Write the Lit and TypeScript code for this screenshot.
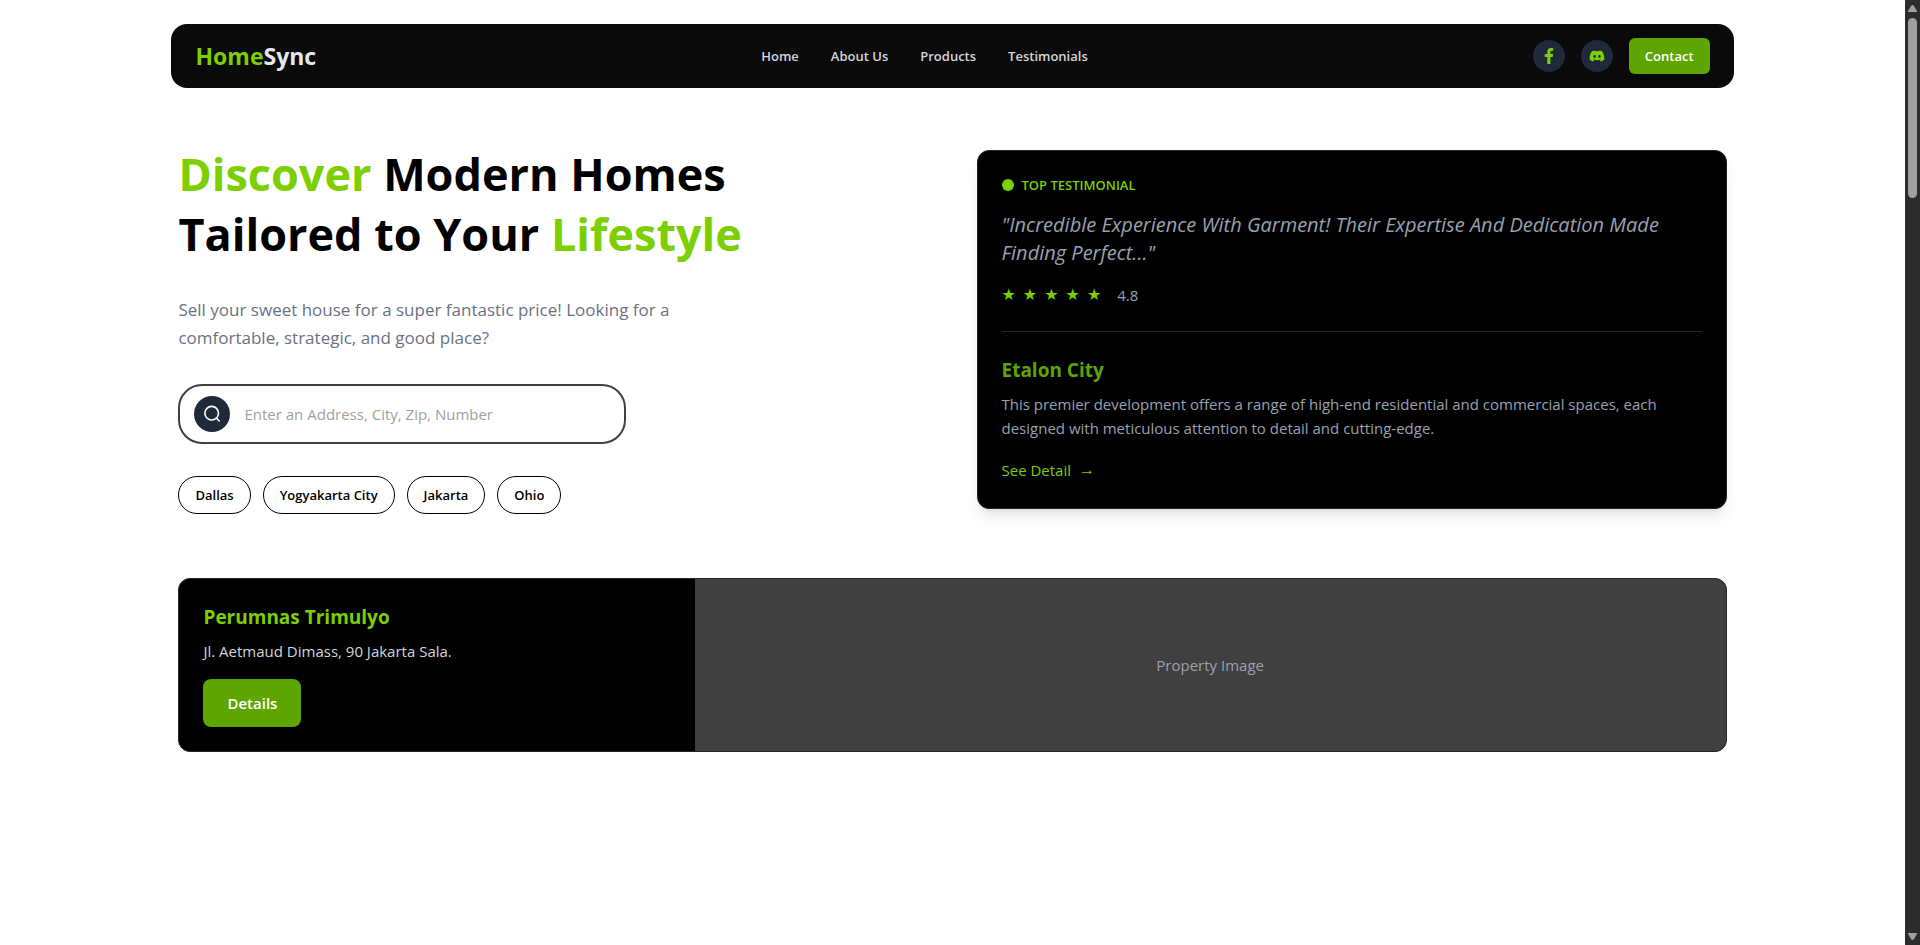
import { LitElement, html, css, svg } from "lit";
import { customElement, state } from "lit/decorators.js";

const facebook = svg`<path d="M279.14 288l14.22-92.66h-88.91v-60.13c0-25.35 12.42-50.06 52.24-50.06h40.42V6.26S260.43 0 225.36 0c-73.22 0-121.08 44.38-121.08 124.72v70.62H22.89V288h81.39v224h100.17V288z"></path>`;
const discord = svg`<path d="M524.531,69.836a1.5,1.5,0,0,0-.764-.7A485.065,485.065,0,0,0,404.081,32.03a1.816,1.816,0,0,0-1.923.91,337.461,337.461,0,0,0-14.9,30.6,447.848,447.848,0,0,0-134.426,0,309.541,309.541,0,0,0-15.135-30.6,1.89,1.89,0,0,0-1.924-.91A483.689,483.689,0,0,0,116.085,69.137a1.712,1.712,0,0,0-.788.676C39.068,183.651,18.186,294.69,28.43,404.354a2.016,2.016,0,0,0,.765,1.375A487.666,487.666,0,0,0,176.02,479.918a1.9,1.9,0,0,0,2.063-.676A348.2,348.2,0,0,0,208.12,430.4a1.86,1.86,0,0,0-1.019-2.588,321.173,321.173,0,0,1-45.868-21.853,1.885,1.885,0,0,1-.185-3.126c3.082-2.309,6.166-4.711,9.109-7.137a1.819,1.819,0,0,1,1.9-.256c96.229,43.917,200.41,43.917,295.5,0a1.812,1.812,0,0,1,1.924.233c2.944,2.426,6.027,4.851,9.132,7.16a1.884,1.884,0,0,1-.162,3.126,301.407,301.407,0,0,1-45.89,21.83,1.875,1.875,0,0,0-1,2.611,391.055,391.055,0,0,0,30.014,48.815,1.864,1.864,0,0,0,2.063.7A486.048,486.048,0,0,0,610.7,405.729a1.882,1.882,0,0,0,.765-1.352C623.729,277.594,590.933,167.465,524.531,69.836ZM222.491,337.58c-28.972,0-52.844-26.587-52.844-59.239S193.056,219.1,222.491,219.1c29.665,0,53.306,26.82,52.843,59.239C275.334,310.993,251.924,337.58,222.491,337.58Zm195.38,0c-28.971,0-52.843-26.587-52.843-59.239S388.437,219.1,417.871,219.1c29.667,0,53.307,26.82,52.844,59.239C470.715,310.993,447.538,337.58,417.871,337.58Z"></path>`;

@customElement("app-root")
export class AppRoot extends LitElement {
  static styles = css`
    :host {
      --lime: #7ccf00;
      --lime-dark: #5ea500;
      --muted: #99a1af;
      --line: #262626;
      display: flex;
      min-height: 100vh;
      background: #fff;
      color: #000;
      font-family: "Open Sans", "Noto Sans", sans-serif;
      font-size: 15px;
      line-height: 24px;
    }
    * {
      box-sizing: border-box;
    }
    h1, h2, p, ul {
      margin: 0;
      padding: 0;
    }
    a {
      color: inherit;
      text-decoration: none;
    }
    button {
      border: 0;
      margin: 0;
      font: inherit;
      cursor: pointer;
    }
    .page {
      flex: 1;
      min-width: 0;
      padding: 24px 0;
    }
    .container {
      width: 82%;
      margin: 0 auto;
    }
    .nav {
      display: flex;
      justify-content: space-between;
      align-items: center;
      height: 64px;
      padding: 0 24px;
      border-radius: 16px;
      background: #0a0a0a;
    }
    .logo {
      color: #e5e7eb;
      font-size: 23px;
      font-weight: 700;
      line-height: 32px;
    }
    .accent {
      color: var(--lime);
    }
    .links {
      display: flex;
      gap: 32px;
      color: #d1d5dc;
      font-size: 13px;
      font-weight: 600;
      line-height: 20px;
    }
    .actions {
      display: flex;
      align-items: center;
      gap: 16px;
    }
    .social {
      display: grid;
      place-items: center;
      width: 32px;
      height: 32px;
      border-radius: 50%;
      background: #1e2939;
      color: var(--lime);
    }
    .social svg {
      width: 16px;
      height: 16px;
      fill: currentColor;
    }
    .contact {
      padding: 8px 16px;
      border-radius: 6px;
      background: var(--lime-dark);
      color: #fff;
      font-size: 13px;
      font-weight: 600;
      line-height: 20px;
    }
    .hero {
      display: grid;
      grid-template-columns: 1fr 1fr;
      align-items: center;
      gap: 48px;
      padding: 56px 7px 0;
    }
    .intro {
      display: flex;
      flex-direction: column;
      gap: 32px;
    }
    h1 {
      font-size: 45px;
      font-weight: 700;
      line-height: 60px;
    }
    .heading-line {
      display: block;
    }
    .lead {
      max-width: 512px;
      color: #6a7282;
      font-size: 17px;
      line-height: 28px;
    }
    .search {
      display: flex;
      align-items: center;
      gap: 14px;
      max-width: 448px;
      height: 60px;
      padding: 0 14px;
      border: 2px solid #404040;
      border-radius: 24px;
    }
    .search-button {
      display: grid;
      place-items: center;
      width: 36px;
      height: 36px;
      padding: 0;
      border-radius: 50%;
      background: #1e2939;
      color: #fff;
    }
    .search-button svg {
      width: 20px;
      height: 20px;
      fill: none;
      stroke: currentColor;
      stroke-width: 1.6;
      stroke-linecap: round;
    }
    .search-input {
      flex: 1;
      min-width: 0;
      padding: 0;
      border: 0;
      outline: 0;
      background: none;
      font: inherit;
    }
    .search-input::placeholder {
      color: #a1a1a1;
      opacity: 1;
    }
    .tags {
      display: flex;
      flex-wrap: wrap;
      gap: 12px;
    }
    .tag {
      padding: 8px 16px;
      border: 1px solid #000;
      border-radius: 19px;
      background: #fff;
      color: #000;
      font-size: 13px;
      font-weight: 600;
      line-height: 20px;
    }
    .card {
      padding: 24px;
      border: 1px solid var(--line);
      border-radius: 12px;
      background: #000;
      color: var(--muted);
      box-shadow: 0 10px 15px -3px rgb(0 0 0 / 0.1), 0 4px 6px -4px rgb(0 0 0 / 0.1);
    }
    .badge {
      display: flex;
      align-items: center;
      gap: 8px;
      color: var(--lime);
      font-size: 13px;
      font-weight: 600;
      line-height: 20px;
      text-transform: uppercase;
    }
    .dot {
      width: 12px;
      height: 12px;
      border-radius: 50%;
      background: currentColor;
    }
    .quote {
      margin: 16px 0;
      font-size: 20px;
      font-style: italic;
      line-height: 28px;
    }
    .rating {
      display: flex;
      gap: 16px;
      padding-bottom: 24px;
      border-bottom: 1px solid var(--line);
    }
    .stars {
      display: flex;
      gap: 7px;
      color: var(--lime);
      font-family: "DejaVu Sans", sans-serif;
      font-size: 16px;
    }
    .title {
      margin-bottom: 8px;
      font-size: 19px;
      font-weight: 700;
      line-height: 28px;
    }
    .project {
      padding-top: 24px;
    }
    .project .title {
      color: var(--lime-dark);
    }
    .detail {
      display: inline-flex;
      gap: 8px;
      margin-top: 16px;
      color: var(--lime);
      line-height: 28px;
      vertical-align: top;
    }
    .arrow {
      font-family: "Liberation Sans", sans-serif;
      font-size: 16px;
    }
    .property {
      display: grid;
      grid-template-columns: 1fr 2fr;
      margin: 64px 7px 0;
      border: 1px solid var(--line);
      border-radius: 12px;
      background: #000;
      overflow: hidden;
    }
    .summary {
      padding: 24px;
      color: #d1d5dc;
    }
    .summary .title {
      color: var(--lime);
    }
    .details-button {
      margin-top: 16px;
      padding: 12px 24px;
      border-radius: 8px;
      background: var(--lime-dark);
      color: #fff;
      font-weight: 600;
      vertical-align: top;
    }
    .photo {
      display: grid;
      place-items: center;
      background: #404040;
      color: var(--muted);
    }
    .rail {
      position: sticky;
      top: 0;
      display: flex;
      flex-direction: column;
      align-items: center;
      width: 15px;
      height: 100vh;
      padding: 5px 0;
      background: #2c2c2c;
    }
    .rail svg {
      width: 9px;
      height: 7px;
      fill: #9f9f9f;
    }
    .track {
      flex: 1;
      padding: 6px 0;
    }
    .thumb {
      width: 9px;
      height: 180px;
      border-radius: 5px;
      background: #9f9f9f;
    }
  `;

  @state() private query = "";

  private cities = ["Dallas", "Yogyakarta City", "Jakarta", "Ohio"];
  private sections = ["Home", "About Us", "Products", "Testimonials"];

  render() {
    return html`
      <div class="page">
        <header class="container nav">
          <a class="logo" href="#"><span class="accent">Home</span>Sync</a>
          <nav class="links">
            ${this.sections.map((name) => html`<a href="#">${name}</a>`)}
          </nav>
          <div class="actions">
            <a class="social" href="#" aria-label="Facebook"><svg viewBox="0 0 320 512">${facebook}</svg></a>
            <a class="social" href="#" aria-label="Discord"><svg viewBox="0 0 640 512">${discord}</svg></a>
            <button class="contact" type="button">Contact</button>
          </div>
        </header>

        <main class="container">
          <section class="hero">
            <div class="intro">
              <h1>
                <span class="heading-line"><span class="accent">Discover</span> Modern Homes</span>
                <span class="heading-line">Tailored to Your <span class="accent">Lifestyle</span></span>
              </h1>
              <p class="lead">Sell your sweet house for a super fantastic price! Looking for a comfortable, strategic, and good place?</p>
              <form class="search" @submit=${(e: Event) => e.preventDefault()}>
                <button class="search-button" aria-label="Search">
                  <svg viewBox="0 0 20 20"><circle cx="9.7" cy="9.2" r="6.8"></circle><path d="M14.300 14L17.200 17"></path></svg>
                </button>
                <input
                  class="search-input"
                  type="text"
                  aria-label="Location"
                  placeholder="Enter an Address, City, Zip, Number"
                  .value=${this.query}
                  @input=${(e: Event) => (this.query = (e.target as HTMLInputElement).value)}
                />
              </form>
              <div class="tags">
                ${this.cities.map(
                  (city) => html`<button class="tag" type="button" @click=${() => (this.query = city)}>${city}</button>`
                )}
              </div>
            </div>

            <article class="card">
              <div class="badge"><span class="dot"></span>Top Testimonial</div>
              <p class="quote">"Incredible Experience With Garment! Their Expertise And Dedication Made Finding Perfect..."</p>
              <div class="rating">
                <span class="stars">${[1, 2, 3, 4, 5].map(() => html`<span>★</span>`)}</span>
                <span>4.8</span>
              </div>
              <div class="project">
                <h2 class="title">Etalon City</h2>
                <p>This premier development offers a range of high-end residential and commercial spaces, each designed with meticulous attention to detail and cutting-edge.</p>
                <a class="detail" href="#"><span>See Detail</span><span class="arrow">→</span></a>
              </div>
            </article>
          </section>

          <section class="property">
            <div class="summary">
              <h2 class="title">Perumnas Trimulyo</h2>
              <p>Jl. Aetmaud Dimass, 90 Jakarta Sala.</p>
              <button class="details-button" type="button">Details</button>
            </div>
            <div class="photo">Property Image</div>
          </section>
        </main>
      </div>

      <div class="rail" aria-hidden="true">
        <svg viewBox="0 0 9 7"><path d="M4.5 0Q5.3 0 6 1L9 6V7H0V6L3 1Q3.7 0 4.5 0Z"></path></svg>
        <div class="track"><div class="thumb"></div></div>
        <svg viewBox="0 0 9 7"><path d="M4.5 7Q5.3 7 6 6L9 1V0H0V1L3 6Q3.7 7 4.5 7Z"></path></svg>
      </div>
    `;
  }
}
